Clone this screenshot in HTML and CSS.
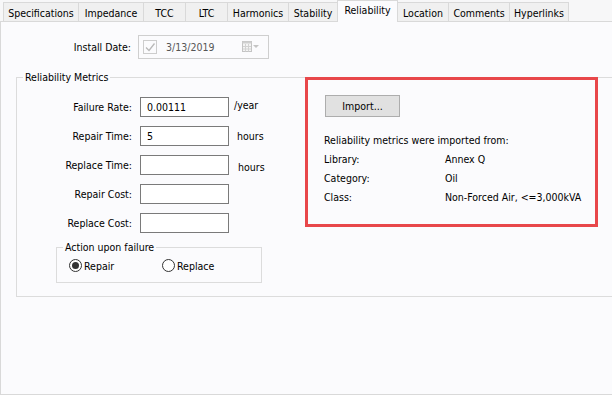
FILE: index.html
```html
<!DOCTYPE html>
<html>
<head>
<meta charset="utf-8">
<link rel="stylesheet" href="styles.css">
</head>
<body>
<div class="tabbar">
  <div class="tab t-spec">Specifications</div>
  <div class="tab t-imp">Impedance</div>
  <div class="tab t-tcc">TCC</div>
  <div class="tab t-ltc">LTC</div>
  <div class="tab t-harm">Harmonics</div>
  <div class="tab t-stab">Stability</div>
  <div class="tab t-rel active">Reliability</div>
  <div class="tab t-loc">Location</div>
  <div class="tab t-com">Comments</div>
  <div class="tab t-hyp">Hyperlinks</div>
</div>
<div class="panel">
  <div class="install-row">
    <span class="lbl">Install Date:</span>
    <div class="datebox">
      <span class="chk">
        <svg width="12" height="12" viewBox="0 0 12 12"><path d="M2 6.5 L5 9.5 L10.5 2.5" fill="none" stroke="#b8b8b8" stroke-width="1.3"/></svg>
      </span>
      <span class="datetext">3/13/2019</span>
      <svg class="cal" width="18" height="12" viewBox="0 0 18 12">
        <rect x="0.5" y="0.5" width="9" height="10" fill="#f4f4f4" stroke="#c4c4c4"/>
        <rect x="0.5" y="0.5" width="9" height="2" fill="#cfcfcf"/>
        <path d="M3.5 3 V10.5 M6.5 3 V10.5 M1 5.5 H9 M1 8 H9" stroke="#d2d2d2" stroke-width="1"/>
        <path d="M11 4 H17 L14 7 Z" fill="#c4c4c4"/>
      </svg>
    </div>
  </div>

  <div class="metrics">
    <span class="legend">Reliability Metrics</span>
    <div class="form-col">
      <div class="grid">
        <span class="lbl">Failure Rate:</span><div class="input">0.00111</div><span class="unit up">/year</span>
        <span class="lbl">Repair Time:</span><div class="input">5</div><span class="unit">hours</span>
        <span class="lbl">Replace Time:</span><div class="input"></div><span class="unit low">hours</span>
        <span class="lbl">Repair Cost:</span><div class="input"></div><span></span>
        <span class="lbl">Replace Cost:</span><div class="input"></div><span></span>
      </div>
      <div class="action">
        <span class="legend small">Action upon failure</span>
        <div class="radios">
          <span class="radio-item"><span class="radio on"></span>Repair</span>
          <span class="radio-item"><span class="radio"></span>Replace</span>
        </div>
      </div>
    </div>
    <div class="import-box">
      <div class="btn">Import...</div>
      <div class="info">
        <div class="info-head">Reliability metrics were imported from:</div>
        <div class="info-row"><span class="k">Library:</span><span>Annex Q</span></div>
        <div class="info-row"><span class="k">Category:</span><span>Oil</span></div>
        <div class="info-row"><span class="k">Class:</span><span>Non-Forced Air, &lt;=3,000kVA</span></div>
      </div>
    </div>
  </div>
</div>
</body>
</html>
```
FILE: styles.css
```css
* { box-sizing: border-box; }
html, body {
  margin: 0;
  padding: 0;
  background: #f7f7f8;
  font-family: "DejaVu Sans Condensed", "Liberation Sans", Arial, sans-serif;
  font-size: 10.5px;
  color: #000;
}
body { width: 612px; height: 395px; overflow: hidden; }

.tabbar {
  display: flex;
  align-items: flex-end;
  height: 21px;
  padding-left: 3px;
  position: relative;
  z-index: 2;
}
.tab {
  height: 19px;
  margin-left: -1px;
  border: 1px solid #d9d9d9;
  border-bottom: none;
  background: #f0f0f0;
  display: flex;
  align-items: center;
  justify-content: center;
  padding-top: 1px;
  white-space: nowrap;
}
.tab:first-child { margin-left: 0; }
.tab.active {
  height: 22px;
  margin-bottom: -1px;
  background: #fbfbfd;
  padding-top: 0;
  padding-bottom: 4px;
  position: relative;
  z-index: 3;
}
.t-spec { width: 76px; }
.t-imp { width: 66px; }
.t-tcc { width: 43px; }
.t-ltc { width: 43px; }
.t-harm { width: 62px; }
.t-stab { width: 50px; }
.t-rel { width: 61px; }
.t-loc { width: 52px; }
.t-com { width: 62px; }
.t-hyp { width: 60px; }

.panel {
  height: 374px;
  border: 1px solid #d9d9d9;
  border-right: none;
  background: #fbfbfd;
  overflow: hidden;
  position: relative;
}

.install-row {
  display: flex;
  align-items: center;
  margin-top: 13px;
  padding-left: 15px;
}
.lbl {
  text-align: right;
  white-space: nowrap;
}
.install-row .lbl { width: 115px; margin-right: 7px; }
.datebox {
  width: 131px;
  height: 24px;
  border: 1px solid #cfcfcf;
  display: flex;
  align-items: center;
  padding-left: 4px;
}
.chk {
  width: 14px;
  height: 14px;
  border: 1px solid #cdcdcd;
  display: flex;
  align-items: center;
  justify-content: center;
}
.datetext { margin-left: 9px; color: #555; }
.cal { margin-left: auto; margin-right: 8px; }

.metrics {
  position: relative;
  margin: 18px -30px 0 15px;
  border: 1px solid #dcdcdc;
  display: flex;
  align-items: flex-start;
  padding-bottom: 13px;
}
.legend {
  position: absolute;
  top: -7px;
  left: 6px;
  padding: 0 2px;
  background: #fbfbfd;
  line-height: 13px;
}
.form-col {
  width: 270px;
  flex: none;
  padding-top: 19px;
}
.grid {
  display: grid;
  grid-template-columns: 115px 89px auto;
  column-gap: 8px;
  row-gap: 9px;
  align-items: center;
}
.input {
  height: 20px;
  border: 1px solid #7a7a7a;
  background: #fff;
  padding-left: 6px;
  line-height: 18px;
}
.unit { margin-left: 0; }
.unit.up { margin-left: -3px; margin-top: -4px; }
.unit.low { margin-top: 4px; margin-left: 1px; }

.action {
  position: relative;
  margin: 14px 0 0 39px;
  width: 206px;
  height: 36px;
  border: 1px solid #dcdcdc;
}
.legend.small { left: 6px; }
.radios {
  display: flex;
  padding: 11px 0 0 12px;
}
.radio-item {
  display: flex;
  align-items: center;
  width: 93px;
}
.radio {
  width: 13px;
  height: 13px;
  border: 1px solid #333;
  border-radius: 50%;
  background: #fff;
  margin-right: 2px;
  position: relative;
}
.radio.on::after {
  content: "";
  position: absolute;
  left: 2px;
  top: 2px;
  width: 7px;
  height: 7px;
  border-radius: 50%;
  background: #333;
}

.import-box {
  flex: none;
  margin: -1px 0 0 18px;
  width: 293px;
  height: 150px;
  border: 3px solid #e8474a;
  padding: 15px 0 0 17px;
  position: relative;
  z-index: 1;
}
.btn {
  width: 75px;
  height: 22px;
  border: 1px solid #adadad;
  background: #e1e1e1;
  display: flex;
  align-items: center;
  justify-content: center;
}
.info {
  margin-top: 14px;
  margin-left: -1px;
  line-height: 19px;
}
.info-row { display: flex; }
.k { width: 121px; }
```
